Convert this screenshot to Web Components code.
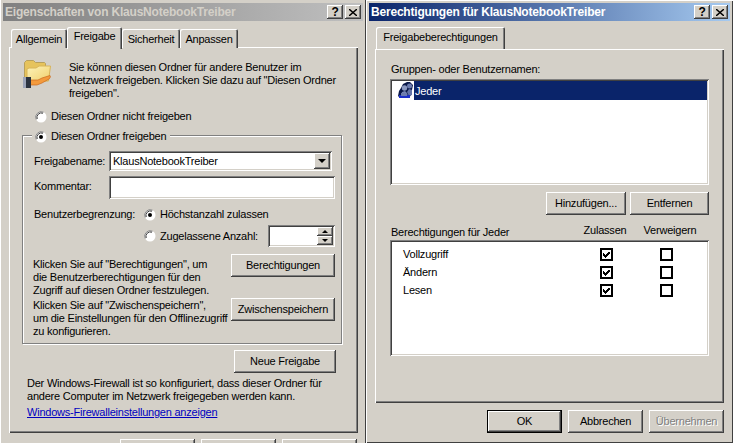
<!DOCTYPE html>
<html lang="de">
<head>
<meta charset="utf-8">
<title>Freigabe</title>
<style>
  html, body { margin: 0; padding: 0; background: #d4d0c8; overflow: hidden; }
  body { width: 733px; height: 443px; font: 11px "Liberation Sans", sans-serif; letter-spacing: -0.22px; color: #000; }
</style>
</head>
<body>
<desktop-view></desktop-view>
<script>
const raised = "box-shadow: inset -1px -1px 0 #404040, inset 1px 1px 0 #fff, inset -2px -2px 0 #808080;";
const sunken = "box-shadow: inset 1px 1px 0 #808080, inset -1px -1px 0 #fff, inset 2px 2px 0 #404040, inset -2px -2px 0 #d4d0c8;";

class XpButton extends HTMLElement {
    constructor(){
        super();
        this.attachShadow({mode: "open"}).innerHTML = `
        <style>
            :host {
                display: flex; align-items: center; justify-content: center;
                box-sizing: border-box; width: 75px; height: 23px;
                background: #d4d0c8; white-space: nowrap; padding-bottom: 1px;
                ${raised}
            }
            :host([default]) { border: 1px solid #000; box-shadow: inset -1px -1px 0 #404040, inset 1px 1px 0 #fff, inset -2px -2px 0 #808080; }
            :host([disabled]) { color: #808080; text-shadow: 1px 1px 0 #fff; }
        </style>
        <slot></slot>`;
    }
}
customElements.define("xp-button", XpButton);

class XpRadio extends HTMLElement {
    constructor(){
        super();
        const on = this.hasAttribute("checked");
        this.attachShadow({mode: "open"}).innerHTML = `
        <style>
            :host { display: inline-flex; align-items: center; gap: 4px; height: 13px; white-space: nowrap; }
            svg { display: block; flex: none; }
        </style>
        <svg width="12" height="12" viewBox="0 0 12 12">
            <circle cx="6" cy="6" r="5.5" fill="#fff"/>
            <path d="M1.2 8.5A5.5 5.5 0 0 1 8.5 1.2" fill="none" stroke="#808080"/>
            <path d="M2.2 8A4.5 4.5 0 0 1 8 2.2" fill="none" stroke="#404040"/>
            ${on ? '<circle cx="6" cy="6" r="2" fill="#000"/>' : ''}
        </svg>
        <slot></slot>`;
    }
}
customElements.define("xp-radio", XpRadio);

class XpCheck extends HTMLElement {
    constructor(){
        super();
        const on = this.hasAttribute("checked");
        this.attachShadow({mode: "open"}).innerHTML = `
        <style>
            :host { display: block; width: 13px; height: 13px; }
            svg { display: block; }
        </style>
        <svg width="13" height="13" viewBox="0 0 13 13" shape-rendering="crispEdges">
            <rect x="1" y="1" width="11" height="11" fill="#fff" stroke="#000" stroke-width="2"/>
            ${on ? '<path d="M3 5h1v1h1v1h1V6h1V5h1V4h2v2H9v1H8v1H7v1H6v1H5V9H4V8H3z" fill="#000"/>' : ''}
        </svg>`;
    }
}
customElements.define("xp-check", XpCheck);

class XpField extends HTMLElement {
    constructor(){
        super();
        this.attachShadow({mode: "open"}).innerHTML = `
        <style>
            :host {
                display: flex; align-items: center; box-sizing: border-box;
                background: #fff; padding: 0 3px 0 4px; white-space: nowrap;
                ${sunken}
            }
        </style>
        <slot></slot>`;
    }
}
customElements.define("xp-field", XpField);

class XpCombo extends HTMLElement {
    constructor(){
        super();
        this.attachShadow({mode: "open"}).innerHTML = `
        <style>
            :host {
                display: flex; align-items: center; justify-content: space-between;
                box-sizing: border-box; background: #fff; padding: 2px 2px 2px 4px;
                ${sunken}
            }
            .arrow {
                box-sizing: border-box; width: 16px; height: 16px; background: #d4d0c8;
                display: flex; align-items: center; justify-content: center;
                ${raised}
            }
            .arrow i { border: 4px solid transparent; border-top-color: #000; border-bottom: 0; }
        </style>
        <span><slot></slot></span>
        <div class="arrow"><i></i></div>`;
    }
}
customElements.define("xp-combo", XpCombo);

class XpSpin extends HTMLElement {
    constructor(){
        super();
        this.attachShadow({mode: "open"}).innerHTML = `
        <style>
            :host {
                display: flex; justify-content: flex-end; box-sizing: border-box;
                background: #fff; padding: 2px;
                ${sunken}
            }
            .btns { display: flex; flex-direction: column; width: 16px; }
            .btn {
                flex: 1; background: #d4d0c8; display: flex; align-items: center; justify-content: center;
                ${raised}
            }
            .up { border: 3px solid transparent; border-bottom-color: #000; border-top: 0; }
            .down { border: 3px solid transparent; border-top-color: #000; border-bottom: 0; }
        </style>
        <div class="btns">
            <div class="btn"><i class="up"></i></div>
            <div class="btn"><i class="down"></i></div>
        </div>`;
    }
}
customElements.define("xp-spin", XpSpin);

class XpTab extends HTMLElement {
    constructor(){
        super();
        this.attachShadow({mode: "open"}).innerHTML = `
        <style>
            :host {
                display: flex; align-items: center; justify-content: center; box-sizing: border-box;
                height: 19px; margin-top: 2px; padding-top: 1px; background: #d4d0c8; white-space: nowrap;
                border-radius: 2px 2px 0 0; position: relative;
                box-shadow: inset 1px 1px 0 #fff, inset -1px 0 0 #404040, inset -2px 0 0 #808080;
            }
            :host([active]) { height: 22px; margin-top: 0; margin-bottom: -1px; z-index: 1; padding-top: 0; padding-bottom: 3px; }
        </style>
        <slot></slot>`;
    }
}
customElements.define("xp-tab", XpTab);

class XpPanel extends HTMLElement {
    constructor(){
        super();
        this.attachShadow({mode: "open"}).innerHTML = `
        <style>
            :host {
                display: block; box-sizing: border-box; width: 349px;
                background: #d4d0c8; padding: 1px 2px 2px 1px;
                box-shadow: inset 1px 1px 0 #fff, inset -1px -1px 0 #404040, inset -2px -2px 0 #808080;
            }
        </style>
        <slot></slot>`;
    }
}
customElements.define("xp-panel", XpPanel);

class XpWindow extends HTMLElement {
    constructor(){
        super();
        this.attachShadow({mode: "open"}).innerHTML = `
        <style>
            :host {
                display: block; box-sizing: border-box; height: 443px; overflow: hidden; flex: none;
                background: #d4d0c8; padding: 3px 3px 0;
            }
            :host([active]) { box-shadow: inset 1px 1px 0 #fff, inset -1px -1px 0 #404040; }
            :host(:not([active])) { box-shadow: inset 1px 0 0 #fff, inset -1px 0 0 #404040; }
            .bar {
                display: flex; align-items: center; height: 18px; padding: 0 2px;
                background: linear-gradient(90deg, #808080, #c0c0c0); color: #d4d0c8;
                font-weight: bold; font-size: 12px; letter-spacing: -0.2px; white-space: nowrap;
            }
            :host([active]) .bar { background: linear-gradient(90deg, #0a246a, #a6caf0); color: #fff; }
            .cap { flex: 1; }
            .ctl {
                box-sizing: border-box; width: 16px; height: 14px; background: #d4d0c8; color: #000; margin-left: 2px;
                display: flex; align-items: center; justify-content: center; font-size: 12px; line-height: 14px;
                ${raised}
            }
            .body { padding: 6px 6px 0; }
        </style>
        <div class="bar">
            <span class="cap">${this.getAttribute("caption")}</span>
            <span class="ctl">?</span>
            <span class="ctl"><svg width="8" height="7" viewBox="0 0 8 7"><path d="M0 0l8 7M8 0L0 7" stroke="#000" stroke-width="1.4"/></svg></span>
        </div>
        <div class="body"><slot></slot></div>`;
    }
}
customElements.define("xp-window", XpWindow);

class SharingPage extends HTMLElement {
    constructor(){
        super();
        this.attachShadow({mode: "open"}).innerHTML = `
        <style>
            :host { display: block; line-height: 13px; }
            .tabs { display: flex; padding-left: 2px; height: 20px; }
            .tabs xp-tab:nth-child(1) { width: 56px; }
            .tabs xp-tab:nth-child(2) { width: 55px; }
            .tabs xp-tab:nth-child(3) { width: 58px; }
            .tabs xp-tab:nth-child(4) { width: 58px; }
            xp-panel { height: 386px; }
            .intro { display: flex; margin: 11px 0 0 12px; gap: 17px; height: 41px; }
            .intro svg { flex: none; display: block; }
            .intro div { padding-top: 2px; white-space: nowrap; }
            .off { display: flex; margin: 10px 0 0 25px; }
            .group {
                box-sizing: border-box; margin: 12px 0 0 12px; width: 320px; height: 209px;
                border: 1px solid #808080; box-shadow: 1px 1px 0 #fff, inset 1px 1px 0 #fff;
            }
            .legend { width: fit-content; margin: -6px 0 0 9px; padding: 0 4px 0 3px; background: #d4d0c8; display: flex; }
            .row { display: flex; align-items: center; padding-left: 11px; }
            .name { margin-top: 8px; height: 20px; }
            .name span { width: 75px; }
            .name xp-combo { width: 223px; height: 20px; }
            .comment { margin-top: 5px; height: 23px; }
            .comment span { width: 75px; padding-bottom: 2px; }
            .comment xp-field { width: 226px; height: 23px; }
            .limit { margin-top: 9px; height: 13px; }
            .limit span { width: 110px; }
            .allowed { margin-top: 4px; height: 22px; padding-left: 121px; }
            .allowed xp-radio { width: 124px; }
            .allowed xp-spin { width: 67px; height: 22px; }
            .hint { display: flex; padding-left: 10px; white-space: nowrap; }
            .hint div { width: 198px; }
            .hint xp-button { width: 104px; }
            .a { margin-top: 7px; height: 44px; }
            .a div { padding-top: 4px; }
            .b div { padding-top: 1px; }
            .share { margin: 6px 0 0 224px; width: 102px; }
            .fw { margin: 4px 0 0 17px; white-space: nowrap; }
            .link { display: block; margin: 3px 0 0 17px; color: #0000c0; text-decoration: underline; width: fit-content; white-space: nowrap; }
            .foot { display: flex; gap: 6px; justify-content: flex-end; margin-top: 6px; }
        </style>
        <div class="tabs">
            <xp-tab>Allgemein</xp-tab>
            <xp-tab active>Freigabe</xp-tab>
            <xp-tab>Sicherheit</xp-tab>
            <xp-tab>Anpassen</xp-tab>
        </div>
        <xp-panel>
            <div class="intro">
                <svg width="30" height="30" viewBox="0 0 30 30">
                    <defs>
                        <linearGradient id="fold" x1="0" y1="0" x2="1" y2="1"><stop offset="0" stop-color="#fdf3b8"/><stop offset="1" stop-color="#f0cf6c"/></linearGradient>
                    </defs>
                    <path d="M2.5 21V3.5l2-2h7l2 2h9l1 1v6z" fill="#e6c35c" stroke="#b8a05c"/>
                    <path d="M5 23V10l2-1h7l3-2h11.500l-2 15z" fill="url(#fold)" stroke="#d8b458"/>
                    <path d="M8 21h8l4-2 8-2.500c1 1 0 2.500-1 3.500l-7 4-5 2H8z" fill="#f39a3c" stroke="#c8681c" stroke-width=".7"/>
                    <rect x="1" y="18" width="8" height="11" fill="#2c3440"/>
                    <rect x="1" y="18" width="3" height="11" fill="#9ca4b8"/>
                </svg>
                <div>Sie können diesen Ordner für andere Benutzer im<br>Netzwerk freigeben. Klicken Sie dazu auf "Diesen Ordner<br>freigeben".</div>
            </div>
            <div class="off"><xp-radio>Diesen Ordner nicht freigeben</xp-radio></div>
            <div class="group">
                <div class="legend"><xp-radio checked>Diesen Ordner freigeben</xp-radio></div>
                <div class="row name"><span>Freigabename:</span><xp-combo>KlausNotebookTreiber</xp-combo></div>
                <div class="row comment"><span>Kommentar:</span><xp-field></xp-field></div>
                <div class="row limit"><span>Benutzerbegrenzung:</span><xp-radio checked>Höchstanzahl zulassen</xp-radio></div>
                <div class="row allowed"><xp-radio>Zugelassene Anzahl:</xp-radio><xp-spin></xp-spin></div>
                <div class="hint a"><div>Klicken Sie auf "Berechtigungen", um<br>die Benutzerberechtigungen für den<br>Zugriff auf diesen Ordner festzulegen.</div><xp-button>Berechtigungen</xp-button></div>
                <div class="hint b"><div>Klicken Sie auf "Zwischenspeichern",<br>um die Einstellungen für den Offlinezugriff<br>zu konfigurieren.</div><xp-button>Zwischenspeichern</xp-button></div>
            </div>
            <xp-button class="share">Neue Freigabe</xp-button>
            <div class="fw">Der Windows-Firewall ist so konfiguriert, dass dieser Ordner für<br>andere Computer im Netzwerk freigegeben werden kann.</div>
            <a class="link">Windows-Firewalleinstellungen anzeigen</a>
        </xp-panel>
        <div class="foot"><xp-button></xp-button><xp-button></xp-button><xp-button></xp-button></div>`;
    }
}
customElements.define("sharing-page", SharingPage);

class PermissionsPage extends HTMLElement {
    constructor(){
        super();
        const rows = ["Vollzugriff", "Ändern", "Lesen"].map(n => `
            <div class="perm"><span>${n}</span><xp-check checked></xp-check><xp-check></xp-check></div>`).join("");
        this.attachShadow({mode: "open"}).innerHTML = `
        <style>
            :host { display: block; line-height: 13px; }
            .tabs { display: flex; padding-left: 1px; height: 20px; }
            .tabs xp-tab { width: 129px; height: 22px; margin-top: 0; padding-bottom: 1px; }
            xp-panel { height: 354px; margin-top: 2px; }
            .lbl { margin: 13px 0 0 15px; }
            .list { box-sizing: border-box; margin: 3px 0 0 14px; width: 319px; background: #fff; padding: 2px; ${sunken} }
            .users { height: 106px; }
            .sel { display: flex; height: 19px; }
            .sel svg { display: block; flex: none; margin-left: 4px; }
            .sel span { flex: 1; background: #0a246a; color: #fff; padding: 4px 0 0 1px; }
            .acts { display: flex; justify-content: flex-end; gap: 4px; width: 319px; margin: 7px 0 0 14px; }
            .acts xp-button:first-child { width: 80px; }
            .acts xp-button:last-child { width: 79px; }
            .head { display: flex; width: 319px; height: 15px; margin: 9px 0 0 14px; }
            .head span { text-align: center; }
            .head span:nth-child(1) { width: 183px; padding: 2px 0 0 1px; box-sizing: border-box; text-align: left; }
            .head span:nth-child(2) { width: 64px; }
            .head span:nth-child(3) { width: 66px; }
            .perms { height: 116px; margin-top: 1px; padding-top: 5px; }
            .perm { display: flex; align-items: center; height: 18px; }
            .perm span { width: 208px; padding-left: 11px; box-sizing: border-box; }
            .perm xp-check:last-child { margin-left: 47px; }
            .foot { display: flex; gap: 6px; justify-content: flex-end; margin-top: 7px; }
        </style>
        <div class="tabs"><xp-tab active>Freigabeberechtigungen</xp-tab></div>
        <xp-panel>
            <div class="lbl">Gruppen- oder Benutzernamen:</div>
            <div class="list users">
                <div class="sel">
                    <svg width="18" height="19" viewBox="0 0 18 19">
                        <path d="M2 15l1-5 2-3 2-4 4-2h3l3 3-1 5-1 5-2 3H4z" fill="#0a1848"/>
                        <circle cx="13.500" cy="5" r="2.500" fill="#6c7cae"/>
                        <circle cx="8.500" cy="7" r="2.700" fill="#8a98c0"/>
                        <path d="M5 15l1-4 3-1 2 2 1 3z" fill="#7484b4"/>
                        <path d="M11 11l2-3 3 1v5l-3 1z" fill="#6474a8"/>
                        <path d="M3 14h11v3H3z" fill="#1c30c8"/>
                        <path d="M5 12h6v3H5z" fill="#6c7cae"/>
                    </svg>
                    <span>Jeder</span>
                </div>
            </div>
            <div class="acts"><xp-button>Hinzufügen...</xp-button><xp-button>Entfernen</xp-button></div>
            <div class="head"><span>Berechtigungen für Jeder</span><span>Zulassen</span><span>Verweigern</span></div>
            <div class="list perms">${rows}</div>
        </xp-panel>
        <div class="foot"><xp-button default>OK</xp-button><xp-button>Abbrechen</xp-button><xp-button disabled>Übernehmen</xp-button></div>`;
    }
}
customElements.define("permissions-page", PermissionsPage);

class DesktopView extends HTMLElement {
    constructor(){
        super();
        this.attachShadow({mode: "open"}).innerHTML = `
        <style>
            :host { display: flex; width: 733px; height: 443px; }
            .l { width: 366px; }
            .r { width: 367px; }
        </style>
        <xp-window class="l" caption="Eigenschaften von KlausNotebookTreiber"><sharing-page></sharing-page></xp-window>
        <xp-window class="r" active caption="Berechtigungen für KlausNotebookTreiber"><permissions-page></permissions-page></xp-window>`;
    }
}
customElements.define("desktop-view", DesktopView);
</script>
</body>
</html>
